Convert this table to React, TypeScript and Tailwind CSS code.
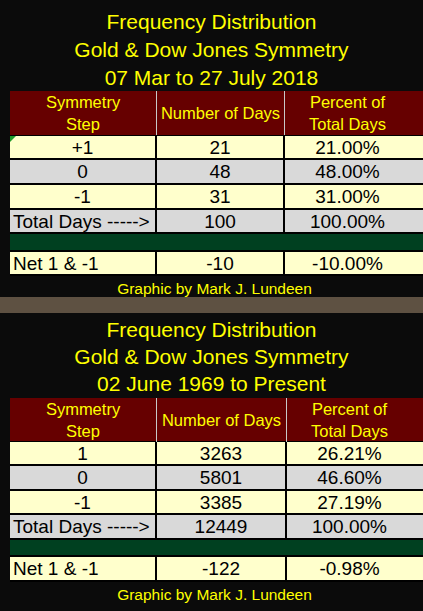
type Cell = { text: string; align?: "left" | "center" };

type Panel = {
  range: string;
  cols: string;
  rows: { cells: Cell[]; bg: string; h: string }[];
  net: Cell[];
  greenH: string;
  netH: string;
  footerH: string;
  titleBox: string;
  headerH: string;
  flag?: boolean;
};

const font = "font-['Liberation_Sans',Arial,sans-serif]";

function DataRow({ cells, bg, h, cols, flag }: { cells: Cell[]; bg: string; h: string; cols: string; flag?: boolean }) {
  return (
    <div className={`grid ${cols} ${h} ${bg} border-b-2 border-black`}>
      {cells.map((c, i) => (
        <div
          key={i}
          className={`relative flex items-center text-[19px] leading-none text-black ${
            c.align === "left" ? "justify-start pl-[3px]" : "justify-center"
          } ${i < 2 ? "border-r-2 border-black" : ""}`}
        >
          {flag && i === 0 && (
            <span className="absolute left-0 top-0 w-0 h-0 border-t-[6px] border-t-[#1f9a2a] border-r-[6px] border-r-transparent" />
          )}
          {c.text}
        </div>
      ))}
    </div>
  );
}

function FreqTable({ p }: { p: Panel }) {
  return (
    <div className="flex flex-col">
      <div className={`flex flex-col items-center text-[21px] text-[#ffff00] ${p.titleBox}`}>
        <div>Frequency Distribution</div>
        <div>Gold &amp; Dow Jones Symmetry</div>
        <div>{p.range}</div>
      </div>
      <div className="ml-[10px] flex flex-col">
        <div className={`grid ${p.cols} ${p.headerH} bg-[#660000] border-b border-black text-[16.5px] leading-[22px] text-[#ffff00]`}>
          <div className="flex flex-col items-center justify-center border-r border-[#c8c8c8]">
            <span>Symmetry</span>
            <span>Step</span>
          </div>
          <div className="flex items-center justify-center border-r border-[#c8c8c8]">Number of Days</div>
          <div className="flex flex-col items-center justify-center">
            <span>Percent of</span>
            <span>Total Days</span>
          </div>
        </div>
        {p.rows.map((r, i) => (
          <DataRow key={i} cells={r.cells} bg={r.bg} h={r.h} cols={p.cols} flag={p.flag && i === 0} />
        ))}
        <div className={`${p.greenH} bg-[#004020] border-b-2 border-black`} />
        <DataRow cells={p.net} bg="bg-[#ffffcc]" h={p.netH} cols={p.cols} />
      </div>
      <div className={`${p.footerH} flex justify-center pt-[2px] pl-[6px] text-[15.5px] leading-[21px] text-[#ffff00]`}>
        Graphic by Mark J. Lundeen
      </div>
    </div>
  );
}

const yellow = "bg-[#ffffcc]";
const gray = "bg-[#d9d9d9]";

const top: Panel = {
  range: "07 Mar to 27 July 2018",
  cols: "grid-cols-[147px_128px_125px]",
  titleBox: "h-[91px] pt-[8px] leading-[28px]",
  headerH: "h-[45px]",
  flag: true,
  rows: [
    { cells: [{ text: "+1" }, { text: "21" }, { text: "21.00%" }], bg: yellow, h: "h-[24px]" },
    { cells: [{ text: "0" }, { text: "48" }, { text: "48.00%" }], bg: gray, h: "h-[25px]" },
    { cells: [{ text: "-1" }, { text: "31" }, { text: "31.00%" }], bg: yellow, h: "h-[25px]" },
    { cells: [{ text: "Total Days ----->", align: "left" }, { text: "100" }, { text: "100.00%" }], bg: gray, h: "h-[24px]" },
  ],
  net: [{ text: "Net 1 & -1", align: "left" }, { text: "-10" }, { text: "-10.00%" }],
  greenH: "h-[18px]",
  netH: "h-[24px]",
  footerH: "h-[21px]",
};

const bottom: Panel = {
  range: "02 June 1969 to Present",
  cols: "grid-cols-[147px_130px_125px]",
  titleBox: "h-[85px] pt-[3px] leading-[27px]",
  headerH: "h-[44px]",
  rows: [
    { cells: [{ text: "1" }, { text: "3263" }, { text: "26.21%" }], bg: yellow, h: "h-[24px]" },
    { cells: [{ text: "0" }, { text: "5801" }, { text: "46.60%" }], bg: gray, h: "h-[25px]" },
    { cells: [{ text: "-1" }, { text: "3385" }, { text: "27.19%" }], bg: yellow, h: "h-[24px]" },
    { cells: [{ text: "Total Days ----->", align: "left" }, { text: "12449" }, { text: "100.00%" }], bg: gray, h: "h-[25px]" },
  ],
  net: [{ text: "Net 1 & -1", align: "left" }, { text: "-122" }, { text: "-0.98%" }],
  greenH: "h-[17px]",
  netH: "h-[25px]",
  footerH: "h-[29px]",
};

export default function App() {
  return (
    <div className={`w-[423px] h-[611px] bg-[#0b0b0b] overflow-hidden ${font}`}>
      <FreqTable p={top} />
      <div className="h-[16px] bg-[#5e5142]" />
      <FreqTable p={bottom} />
    </div>
  );
}
